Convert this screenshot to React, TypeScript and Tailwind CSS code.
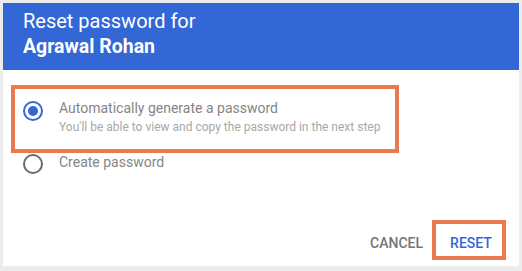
import React from "react";

function Radio({ checked }: { checked: boolean }) {
  return (
    <svg width="20" height="20" viewBox="0 0 20 20" className="shrink-0">
      <circle cx="10" cy="10" r="9" fill="none" stroke={checked ? "#3367d6" : "#6b6b6b"} strokeWidth="2" />
      {checked && <circle cx="10" cy="10" r="5" fill="#3367d6" />}
    </svg>
  );
}

export default function App() {
  return (
    <div className="w-[522px] h-[271px] bg-[#ececec] pt-[3px] pl-[3px]" style={{ fontFamily: "Roboto, 'Liberation Sans', sans-serif" }}>
      <div className="w-[516px] h-[263px] bg-white flex flex-col">
        <div className="h-[67px] bg-[#3367d6] pl-[20px] pt-[5px] text-white leading-[26px]">
          <div className="text-[20px]">Reset password for</div>
          <div className="font-bold text-[19.5px]">Agrawal Rohan</div>
        </div>
        <div className="mt-[15px] ml-[8px] w-[388px] h-[68px] border-4 border-[#e97a4e] flex pl-[8px] pt-[9px]">
          <div className="pt-[3px]">
            <Radio checked />
          </div>
          <div className="ml-[16px]">
            <div className="text-[14px] leading-[20px] text-[#858585]">Automatically generate a password</div>
            <div className="text-[12px] leading-[16px] text-[#a8a8a8] mt-[1px]">You'll be able to view and copy the password in the next step</div>
          </div>
        </div>
        <div className="flex items-center pl-[20px] -mt-[2px]">
          <div className="pt-[3px]">
            <Radio checked={false} />
          </div>
          <div className="ml-[16px] text-[14px] leading-[20px] text-[#858585] -mt-[1px]">Create password</div>
        </div>
        <div className="mt-auto flex justify-end items-end pr-[13px] pb-[6px]">
          <div className="mb-[7px] mr-[9px] text-[14px] leading-[20px] font-medium text-[#757575]">CANCEL</div>
          <div className="w-[74px] h-[40px] border-4 border-[#e97a4e] flex justify-center pt-[9px] pl-[4px]">
            <span className="text-[14px] leading-[20px] font-medium text-[#3367d6]">RESET</span>
          </div>
        </div>
      </div>
    </div>
  );
}
